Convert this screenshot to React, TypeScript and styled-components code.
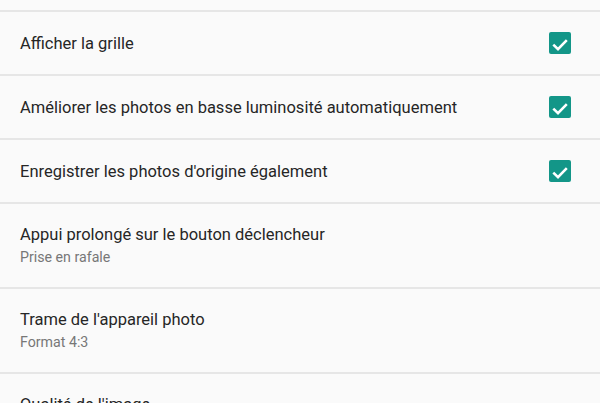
import React from "react";
import styled, { createGlobalStyle } from "styled-components";

const GlobalStyle = createGlobalStyle`
  html, body {
    margin: 0;
    padding: 0;
    background: #fafafa;
  }
  body {
    font-family: Roboto, "Noto Sans", sans-serif;
  }
`;

interface Setting {
  title: string;
  summary?: string;
  checked?: boolean;
}

const settings: Setting[] = [
  { title: "Afficher la grille", checked: true },
  { title: "Améliorer les photos en basse luminosité automatiquement", checked: true },
  { title: "Enregistrer les photos d'origine également", checked: true },
  { title: "Appui prolongé sur le bouton déclencheur", summary: "Prise en rafale" },
  { title: "Trame de l'appareil photo", summary: "Format 4:3" },
  { title: "Qualité de l'image", summary: "Élevée" },
];

const Screen = styled.div`
  width: 600px;
  height: 403px;
  overflow: hidden;
  background: #fafafa;
`;

const TopSpacer = styled.div`
  height: 10px;
  border-bottom: 2px solid #e6e6e6;
`;

const Row = styled.div<{ $tall: boolean }>`
  display: flex;
  align-items: center;
  justify-content: space-between;
  height: ${(p) => (p.$tall ? "83px" : "62px")};
  padding: 0 29px 0 20px;
  border-bottom: 2px solid #e6e6e6;
`;

const TextBlock = styled.div`
  display: flex;
  flex-direction: column;
  gap: 2px;
`;

const Title = styled.div`
  font-size: 16.5px;
  color: #262626;
  line-height: 21px;
`;

const Summary = styled.div`
  font-size: 14.2px;
  color: #777;
  line-height: 20px;
`;

const CheckBox = styled.div`
  width: 22px;
  height: 22px;
  border-radius: 2px;
  background: #139688;
  flex-shrink: 0;
`;

const Check = () => (
  <svg width="22" height="22" viewBox="0 0 22 22" style={{ display: "block" }}>
    <path
      d="M4.3 12.6l4.7 4.5L17.8 8.2"
      fill="none"
      stroke="#fff"
      strokeWidth="2.6"
    />
  </svg>
);

export default function App() {
  return (
    <>
      <GlobalStyle />
      <Screen>
        <TopSpacer />
        {settings.map((s, i) => (
          <Row key={i} $tall={!!s.summary}>
            <TextBlock>
              <Title>{s.title}</Title>
              {s.summary && <Summary>{s.summary}</Summary>}
            </TextBlock>
            {s.checked && (
              <CheckBox>
                <Check />
              </CheckBox>
            )}
          </Row>
        ))}
      </Screen>
    </>
  );
}
